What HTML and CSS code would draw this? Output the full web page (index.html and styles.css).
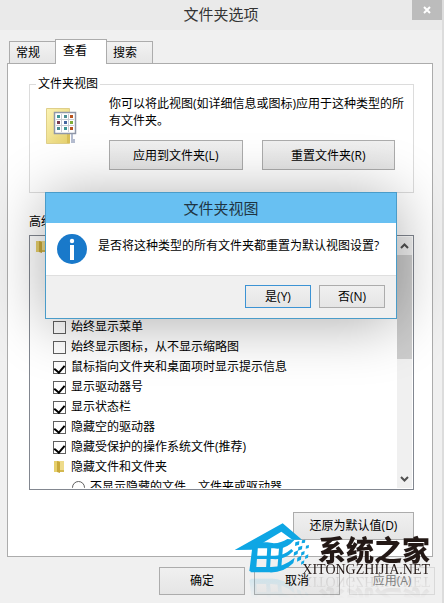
FILE: index.html
```html
<!DOCTYPE html>
<html lang="zh-CN">
<head>
    <meta charset="utf-8">
    <title>文件夹选项</title>
    <link rel="stylesheet" href="styles.css">
</head>
<body>
<svg class="defs" aria-hidden="true">
    <symbol id="folder" viewBox="0 0 12 14">
        <path d="M1 1h5v11H1z" fill="#e6cf6c"/>
        <path d="M6 1h5v11H6z" fill="#eedb8a"/>
        <path d="M4 1l3 1v11l-3-1z" fill="#c9a93a"/>
        <path d="M7 10h4v2H7z" fill="#d3b850"/>
    </symbol>
</svg>

<div class="window">
    <header class="titlebar">
        <h1>文件夹选项</h1>
        <button class="close" type="button" aria-label="关闭">
            <svg viewBox="0 0 8 8" width="8" height="8"><path d="M1 1l6 6M7 1l-6 6" stroke="#fff" stroke-width="2"/></svg>
        </button>
    </header>

    <div class="tabs" role="tablist">
        <button class="tab" type="button" role="tab">常规</button>
        <button class="tab active" type="button" role="tab" aria-selected="true">查看</button>
        <button class="tab" type="button" role="tab">搜索</button>
    </div>

    <main class="panel">
        <fieldset class="group">
            <legend>文件夹视图</legend>
            <div class="views">
                <svg class="views-icon" viewBox="0 0 32 38" width="32" height="38">
                    <defs>
                        <linearGradient id="paper" x1="0" y1="0" x2="1" y2="1">
                            <stop offset="0" stop-color="#fbf3b4"/>
                            <stop offset="1" stop-color="#e5cf6c"/>
                        </linearGradient>
                    </defs>
                    <path d="M1.500 1.500h23v35h-23z" fill="url(#paper)" stroke="#dfcf8a"/>
                    <path d="M22 27h3v9h-3z" fill="#d9c05a"/>
                    <path d="M26 27h2v5h2v4h-4z" fill="#b5bdd0"/>
                    <path d="M9.500 5.500h21v21h-21z" fill="#fff" stroke="#8f97a8" stroke-width="1.500"/>
                    <path d="M16.500 7v18M23.500 7v18M11 12.500h18M11 18.500h18" stroke="#c9ccd3"/>
                    <path d="M12 8h3v3h-3zM19 20h3v3h-3z" fill="#3c9593"/>
                    <path d="M19 8h3v3h-3zM12 20h3v3h-3z" fill="#4b8e93"/>
                    <path d="M25 8h3v3h-3zM25 20h3v3h-3z" fill="#b85320"/>
                    <path d="M12 14h3v3h-3z" fill="#7a3b4c"/>
                    <path d="M19 14h3v3h-3z" fill="#4667a0"/>
                    <path d="M25 14h3v3h-3z" fill="#7fae38"/>
                </svg>
                <div class="views-body">
                    <p>你可以将此视图(如详细信息或图标)应用于这种类型的所有文件夹。</p>
                    <div class="views-actions">
                        <button class="btn" type="button">应用到文件夹(L)</button>
                        <button class="btn" type="button">重置文件夹(R)</button>
                    </div>
                </div>
            </div>
        </fieldset>

        <h2 class="label">高级设置:</h2>
        <div class="listbox">
            <ul class="options">
                <li class="root"><svg class="folder"><use href="#folder"/></svg></li>
                <li><label><input type="checkbox">始终显示菜单</label></li>
                <li><label><input type="checkbox">始终显示图标，从不显示缩略图</label></li>
                <li><label><input type="checkbox" checked>鼠标指向文件夹和桌面项时显示提示信息</label></li>
                <li><label><input type="checkbox" checked>显示驱动器号</label></li>
                <li><label><input type="checkbox" checked>显示状态栏</label></li>
                <li><label><input type="checkbox" checked>隐藏空的驱动器</label></li>
                <li><label><input type="checkbox" checked>隐藏受保护的操作系统文件(推荐)</label></li>
                <li><svg class="folder"><use href="#folder"/></svg>隐藏文件和文件夹</li>
                <li class="sub"><label><input type="radio" name="hidden">不显示隐藏的文件、文件夹或驱动器</label></li>
            </ul>
            <div class="scrollbar">
                <svg viewBox="0 0 9 6" width="9" height="6"><path d="M1 5l3.500-3.500L8 5" fill="none" stroke="#505050" stroke-width="2"/></svg>
                <div class="thumb"></div>
                <svg viewBox="0 0 9 6" width="9" height="6"><path d="M1 1l3.500 3.500L8 1" fill="none" stroke="#505050" stroke-width="2"/></svg>
            </div>
        </div>

        <div class="restore">
            <button class="btn" type="button">还原为默认值(D)</button>
        </div>
    </main>

    <footer class="actions">
        <button class="btn" type="button">确定</button>
        <button class="btn" type="button">取消</button>
        <button class="btn" type="button" disabled>应用(A)</button>
    </footer>

    <section class="dialog" role="dialog" aria-labelledby="dialog-title">
        <h2 id="dialog-title">文件夹视图</h2>
        <div class="message">
            <svg viewBox="0 0 30 30" width="30" height="30">
                <circle cx="15" cy="15" r="15" fill="#1979ca"/>
                <circle cx="15" cy="7" r="2.200" fill="#fff"/>
                <path d="M13 11h4v15h-4z" fill="#fff"/>
            </svg>
            <p>是否将这种类型的所有文件夹都重置为默认视图设置?</p>
        </div>
        <div class="dialog-actions">
            <button class="btn primary" type="button">是(Y)</button>
            <button class="btn" type="button">否(N)</button>
        </div>
    </section>

    <div class="brand">
        <svg class="brand-logo" viewBox="0 0 240 174" width="80" height="58">
            <g fill="#0ea6e4">
                <path d="M14 105L158 25L216 74L187 74L154 50L84 92L78 168Q68 173 58 168L66 104Z"/>
                <path d="M80 82L112 82Q145 90 172 72L194 74Q166 106 132 100L80 100Z"/>
                <path d="M74 122L128 122Q158 125 184 102L190 108Q164 136 128 132L74 132Z"/>
                <path d="M62 156L118 156Q158 158 194 128L190 144Q160 174 118 172L62 172Z"/>
                <path d="M112 92L124 92L120 164L108 164Z"/>
                <path d="M148 88L160 82L154 156L142 162Z"/>
                <path d="M196 82L208 78L207 89L195 93ZM216 76L226 74L225 83L215 85ZM205 96L217 92L216 103L204 107ZM228 92L237 90L236 99L227 101ZM192 112L204 106L203 117L191 123ZM214 112L224 108L223 118L213 122ZM202 128L214 122L213 134L201 140ZM226 122L235 118L234 128L225 132ZM214 140L223 136L222 145L213 149Z"/>
            </g>
        </svg>
        <div class="brand-text">
            <strong>系统之家</strong>
            <span>XITONGZHIJIA.NET</span>
        </div>
    </div>
</div>
</body>
</html>
```

FILE: styles.css
```css
* {
    box-sizing: border-box;
}
body {
    margin: 0;
    background: #f0f0f0;
    color: #000;
    font: 12px/16px "Open Sans", "Noto Sans CJK SC", sans-serif;
}
h1, h2, p, ul {
    margin: 0;
    padding: 0;
    font-weight: normal;
}
button {
    font: inherit;
    color: inherit;
}
.defs {
    position: absolute;
    width: 0;
    height: 0;
}
.window {
    position: relative;
    min-height: 100vh;
    padding-bottom: 8px;
    border-right: 2px solid #dcdcdc;
}
.titlebar {
    position: relative;
    height: 30px;
    background: #eaeaea;
}
.titlebar h1 {
    font-size: 15px;
    line-height: 28px;
    text-align: center;
    color: #333;
}
.close {
    position: absolute;
    top: 0;
    right: 0;
    display: flex;
    align-items: center;
    justify-content: center;
    width: 30px;
    height: 20px;
    padding: 0;
    border: 0;
    background: #bcbcbc;
}

.tabs {
    position: relative;
    z-index: 1;
    display: flex;
    align-items: flex-end;
    height: 33px;
    padding-left: 9px;
}
.tab {
    height: 22px;
    width: 46px;
    padding: 0 6px;
    border: 1px solid #acacac;
    border-bottom: 0;
    background: linear-gradient(#f2f2f2, #e6e6e6);
    text-align: left;
}
.tab.active {
    width: 52px;
    height: 25px;
    margin-bottom: -1px;
    padding: 0 7px 2px;
    background: #fff;
}
.tab:first-child {
    border-right: 0;
}
.tab:last-child {
    border-left: 0;
}

.panel {
    margin: 0 9px 10px 7px;
    padding: 12px 18px 16px 21px;
    border: 1px solid #acacac;
    background: #fff;
}
.group {
    min-width: 0;
    margin: 0;
    padding: 3px 8px 22px 15px;
    border: 1px solid #dcdcdc;
}
.group legend {
    margin-left: -9px;
    padding: 0 2px;
}
.views {
    display: flex;
    gap: 32px;
}
.views-icon {
    flex: none;
    margin-top: 12px;
}
.views-body {
    flex: 1;
    line-height: 17px;
}
.views-actions {
    display: grid;
    grid-template-columns: 1fr 1fr;
    gap: 19px;
    margin: 11px 10px 0 0;
}
.btn {
    height: 28px;
    padding: 0;
    border: 1px solid #acacac;
    background: linear-gradient(#f0f0f0, #e5e5e5);
    text-align: center;
}
.views-actions .btn {
    height: 30px;
}
.btn:disabled {
    border-color: #d9d9d9;
    background: #efefef;
    color: #838383;
}
.label {
    margin: 21px 0 5px;
    font-size: 12px;
}

.listbox {
    display: flex;
    height: 255px;
    padding: 1px;
    border: 1px solid #828790;
}
.options {
    flex: 1;
    overflow: hidden;
    list-style: none;
}
.options li {
    display: flex;
    align-items: center;
    height: 20px;
    padding-left: 22px;
}
.options .root {
    margin-bottom: 60px;
    padding-left: 4px;
}
.options .sub {
    padding-left: 41px;
}
.options label {
    display: flex;
    align-items: center;
}
.options input {
    display: flex;
    align-items: flex-start;
    justify-content: center;
    width: 13px;
    height: 13px;
    margin: 0 5px 0 0;
    border: 1px solid #606060;
    background: #fff;
    appearance: none;
}
.options input[type="radio"] {
    border-radius: 50%;
}
.options input:checked::before {
    content: "";
    width: 5px;
    height: 8px;
    margin-top: 1px;
    border: solid #000;
    border-width: 0 2px 2px 0;
    transform: rotate(40deg);
}
.folder {
    width: 12px;
    height: 14px;
    margin-right: 6px;
}
.scrollbar {
    display: flex;
    flex-direction: column;
    align-items: center;
    width: 15px;
    padding: 6px 0;
    background: #f0f0f0;
}
.thumb {
    width: 15px;
    height: 104px;
    margin: 6px 0 auto;
    background: #cdcdcd;
}
.restore {
    margin-top: 22px;
    text-align: right;
}
.restore .btn {
    display: inline-block;
    width: 121px;
    vertical-align: top;
}
.actions {
    display: flex;
    justify-content: flex-end;
    gap: 9px;
    padding-right: 7px;
}
.actions .btn {
    width: 86px;
}

.dialog {
    position: absolute;
    z-index: 2;
    top: 192px;
    left: 45px;
    right: 45px;
    border: 1px solid #4a9cc9;
    background: #fff;
    box-shadow: 0 4px 60px rgba(0, 0, 0, .33);
}
.dialog h2 {
    background: #68c0f2;
    color: #1f3442;
    font-size: 15px;
    line-height: 30px;
    text-align: center;
}
.message {
    display: flex;
    gap: 11px;
    height: 52px;
    padding: 11px;
}
.message p {
    padding-top: 4px;
    white-space: nowrap;
}
.dialog-actions {
    display: flex;
    justify-content: flex-end;
    gap: 8px;
    padding: 9px 11px 10px;
    border-top: 1px solid #dfdfdf;
    background: #f0f0f0;
}
.dialog-actions .btn {
    width: 66px;
    height: 23px;
}
.dialog-actions .primary {
    border-color: #3c93d4;
}

/* site mark, floats over the lower right corner */
.brand {
    position: absolute;
    z-index: 3;
    right: 12px;
    bottom: 26px;
    display: flex;
    align-items: flex-end;
    pointer-events: none;
    -webkit-box-reflect: below -3px linear-gradient(transparent 60%, rgba(0, 0, 0, .15));
}
.brand-logo {
    margin: 0 -8px 4px 0;
}
.brand-text {
    display: flex;
    flex-direction: column;
    align-items: flex-end;
    color: #231815;
}
.brand-text strong {
    font: 900 28px/28px "Noto Sans CJK SC", sans-serif;
}
.brand-text span {
    font: 14px/14px "Liberation Serif", serif;
}
```
